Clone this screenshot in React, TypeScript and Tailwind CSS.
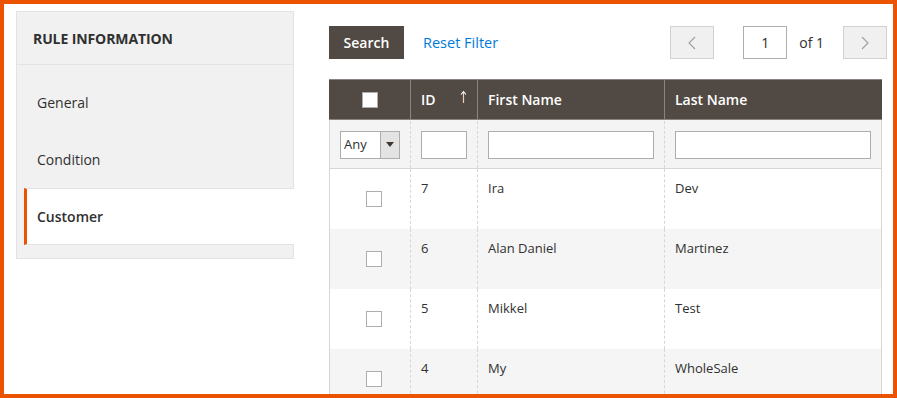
import React from "react";

const rows = [
  { id: 7, first: "Ira", last: "Dev" },
  { id: 6, first: "Alan Daniel", last: "Martinez" },
  { id: 5, first: "Mikkel", last: "Test" },
  { id: 4, first: "My", last: "WholeSale" },
];

const navItems = ["General", "Condition"];

function Checkbox() {
  return <span className="block w-4 h-4 bg-white border border-[#adadad]" />;
}

export default function App() {
  return (
    <div className="w-[897px] h-[398px] overflow-hidden border-4 border-[#eb5202] bg-white font-['Open_Sans',sans-serif] text-[#303030]">
      <div className="flex pl-3 pt-[7px]">
        {/* side nav */}
        <div className="w-[278px] shrink-0 self-start border border-[#e3e3e3] bg-[#f1f1f1]">
          <div className="h-[53px] flex items-center px-4 border-b border-[#e3e3e3]">
            <span className="text-[14px] font-bold tracking-[-0.1px] text-[#303030]">
              RULE INFORMATION
            </span>
          </div>
          <ul className="pl-[7px] pt-[9px] pb-[13px]">
            {navItems.map((item) => (
              <li key={item} className="h-[57px] flex items-center pl-[13px] text-[14px]">
                {item}
              </li>
            ))}
            <li className="h-[57px] -mr-px flex items-center pl-[10px] bg-white border-l-[3px] border-l-[#eb5202] border-y border-y-[#e3e3e3] text-[14px] font-semibold text-[#303030]">
              Customer
            </li>
          </ul>
        </div>

        {/* grid area */}
        <div className="ml-[35px] w-[558px] shrink-0 pt-[15px]">
          <div className="flex items-center h-[33px]">
            <button className="w-[75px] h-[33px] bg-[#514943] text-white text-[14px] font-semibold">
              Search
            </button>
            <span className="ml-[19px] text-[14.5px] text-[#007bdb]">Reset Filter</span>
            <div className="ml-auto flex items-center">
              <button className="w-[44px] h-[33px] bg-[#f0f0f0] border border-[#d1d1d1] flex items-center justify-center">
                <svg width="8" height="14" viewBox="0 0 8 14" fill="none">
                  <polyline points="7,1 1,7 7,13" stroke="#9e9e9e" strokeWidth="1.1" />
                </svg>
              </button>
              <div className="ml-[29px] w-[44px] h-[33px] border border-[#adadad] bg-white flex items-center justify-center text-[14px]">
                1
              </div>
              <span className="ml-3 text-[14px] text-[#303030]">of 1</span>
              <button className="ml-[19px] w-[44px] h-[33px] bg-[#f0f0f0] border border-[#d1d1d1] flex items-center justify-center">
                <svg width="8" height="14" viewBox="0 0 8 14" fill="none">
                  <polyline points="1,1 7,7 1,13" stroke="#9e9e9e" strokeWidth="1.1" />
                </svg>
              </button>
            </div>
          </div>

          <div className="mt-5 w-[553px] border-x border-[#d6d6d6]">
            {/* header */}
            <div className="flex h-[41px] bg-[#514943] border-y border-[#8a837f] -mx-px text-white text-[14px] font-semibold">
              <div className="w-[81px] flex items-center justify-center">
                <span className="block w-4 h-4 bg-white border border-[#adadad]" />
              </div>
              <div className="w-[67px] border-l border-[#8a837f] flex items-center pl-[10px] relative">
                ID
                <svg className="absolute right-[10px] top-[10px]" width="7" height="14" viewBox="0 0 7 14" fill="none">
                  <line x1="3.5" y1="2" x2="3.5" y2="13" stroke="#f3cdb4" strokeWidth="1.2" />
                  <polyline points="1,4.5 3.5,1.5 6,4.5" stroke="#ffffff" strokeWidth="1.1" />
                </svg>
              </div>
              <div className="w-[187px] border-l border-[#8a837f] flex items-center pl-[10px]">First Name</div>
              <div className="w-[218px] border-l border-[#8a837f] flex items-center pl-[10px]">Last Name</div>
            </div>

            {/* filters */}
            <div className="flex h-[49px] pt-px bg-[#f4f4f4] border-b border-[#d6d6d6]">
              <div className="w-[80px] flex items-center pl-[10px]">
                <div className="w-[60px] h-[28px] flex border border-[#adadad] bg-white">
                  <span className="flex-1 flex items-center pl-[3px] text-[13px] text-[#303030]">Any</span>
                  <span className="w-[19px] border-l border-[#adadad] bg-[#e3e3e3] flex items-center justify-center">
                    <svg width="8" height="5" viewBox="0 0 8 5">
                      <polygon points="0,0 8,0 4,5" fill="#41362f" />
                    </svg>
                  </span>
                </div>
              </div>
              <div className="w-[67px] border-l border-dashed border-[#d6d6d6] flex items-center pl-[10px]">
                <div className="w-[46px] h-[28px] border border-[#adadad] bg-white" />
              </div>
              <div className="w-[187px] border-l border-dashed border-[#d6d6d6] flex items-center pl-[10px]">
                <div className="w-[166px] h-[28px] border border-[#adadad] bg-white" />
              </div>
              <div className="w-[217px] border-l border-dashed border-[#d6d6d6] flex items-center pl-[10px]">
                <div className="w-[196px] h-[28px] border border-[#adadad] bg-white" />
              </div>
            </div>

            {/* rows */}
            {rows.map((r, i) => (
              <div
                key={r.id}
                className={`flex h-[60px] text-[13px] leading-[18px] ${
                  i % 2 === 1 ? "bg-[#f5f5f5]" : "bg-white"
                }`}
              >
                <div className="w-[80px] flex items-center pl-[36px]">
                  <Checkbox />
                </div>
                <div className="w-[67px] border-l border-dashed border-[#d6d6d6] pl-[10px] pt-[10px]">{r.id}</div>
                <div className="w-[187px] border-l border-dashed border-[#d6d6d6] pl-[10px] pt-[10px]">{r.first}</div>
                <div className="w-[217px] border-l border-dashed border-[#d6d6d6] pl-[10px] pt-[10px]">{r.last}</div>
              </div>
            ))}
          </div>
        </div>
      </div>
    </div>
  );
}
